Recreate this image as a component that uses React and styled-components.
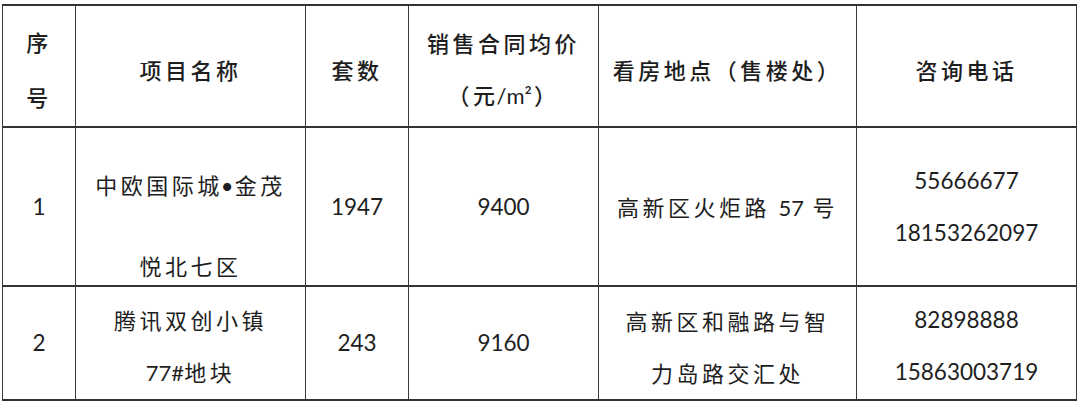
import React from 'react'
import styled, { createGlobalStyle } from 'styled-components'

const GlobalStyle = createGlobalStyle`
  html, body {
    margin: 0;
    padding: 0;
    background: #fff;
  }
`;

const Wrapper = styled.div`
  padding: 4px 0 0 2px;
`;

const Table = styled.table`
  width: 1074px;
  table-layout: fixed;
  border-collapse: collapse;
  font-family: Lato, "Noto Sans CJK SC", sans-serif;
  font-size: 22px;
  color: #1e1e1e;

  td, th {
    border-top: 2px solid #333;
    border-bottom: 2px solid #333;
    border-left: 1px solid #3a3a3a;
    border-right: 1px solid #3a3a3a;
    padding: 0;
    text-align: center;
    vertical-align: middle;
  }
`;

const HeadRow = styled.tr`
  height: 122px;
`;

const BodyRow = styled.tr`
  height: ${props => props.$height}px;
`;

const HeadCell = styled.th`
  font-family: "Noto Sans CJK SC", sans-serif;
  font-weight: 500;
  letter-spacing: 3.5px;
  line-height: ${props => props.$lh || 53}px;
  padding-top: 6px !important;
`;

const Cell = styled.td`
  font-family: "Noto Sans CJK SC", sans-serif;
  letter-spacing: 3.5px;
  line-height: 52px;
  padding-top: ${props => props.$offset || 0}px !important;
`;

const LooseCell = styled.td`
  font-family: "Noto Sans CJK SC", sans-serif;
  letter-spacing: 3.5px;
  line-height: 40px;
  vertical-align: top !important;
  padding-top: 36px !important;
`;

const LooseLine = styled.div`
  & + & {
    margin-top: 39px;
  }
`;

const Num = styled.span`
  font-family: Lato, sans-serif;
  letter-spacing: 0;
`;

const Unit = styled.span`
  font-family: Lato, sans-serif;
  font-weight: 400;
  letter-spacing: 0;
  margin: 0 2px 0 -2px;
`;

const Dot = styled.span`
  font-family: Lato, sans-serif;
  letter-spacing: 1px;
  margin-left: -2px;
`;

const NumCell = styled.td`
  font-family: Lato, sans-serif;
  font-size: 22.5px;
  line-height: 52px;
  padding-top: ${props => props.$offset || 0}px !important;
`;

const rows = [
  {
    id: '1',
    height: 159,
    name: [<>中欧国际城<Dot>•</Dot>金茂</>, '悦北七区'],
    loose: true,
    count: '1947',
    price: '9400',
    place: [<>高新区火炬路 <Num>57</Num> 号</>],
    phones: ['55666677', '18153262097'],
  },
  {
    id: '2',
    height: 112,
    name: ['腾讯双创小镇', <><Num>77#</Num>地块</>],
    count: '243',
    price: '9160',
    place: ['高新区和融路与智', '力岛路交汇处'],
    phones: ['82898888', '15863003719'],
  },
];

const Lines = ({ items }) => items.map((item, i) => (
  <React.Fragment key={i}>
    {i > 0 && <br />}
    {item}
  </React.Fragment>
));

export default function App() {
  return (
    <Wrapper>
      <GlobalStyle />
      <Table>
        <colgroup>
          <col style={{ width: 73 }} />
          <col style={{ width: 230 }} />
          <col style={{ width: 103 }} />
          <col style={{ width: 190 }} />
          <col style={{ width: 258 }} />
          <col style={{ width: 220 }} />
        </colgroup>
        <thead>
          <HeadRow>
            <HeadCell $lh={55}>序<br />号</HeadCell>
            <HeadCell>项目名称</HeadCell>
            <HeadCell>套数</HeadCell>
            <HeadCell $lh={52}>销售合同均价<br />（元<Unit>/m²</Unit>）</HeadCell>
            <HeadCell>看房地点（售楼处）</HeadCell>
            <HeadCell>咨询电话</HeadCell>
          </HeadRow>
        </thead>
        <tbody>
          {rows.map(row => (
            <BodyRow key={row.id} $height={row.height}>
              <NumCell>{row.id}</NumCell>
              {row.loose ? (
                <LooseCell>
                  {row.name.map((line, i) => <LooseLine key={i}>{line}</LooseLine>)}
                </LooseCell>
              ) : (
                <Cell $offset={6}>
                  <Lines items={row.name} />
                </Cell>
              )}
              <NumCell>{row.count}</NumCell>
              <NumCell>{row.price}</NumCell>
              <Cell $offset={row.loose ? 0 : 6}>
                <Lines items={row.place} />
              </Cell>
              <NumCell $offset={row.loose ? 0 : 6}>
                <Lines items={row.phones} />
              </NumCell>
            </BodyRow>
          ))}
        </tbody>
      </Table>
    </Wrapper>
  )
}
